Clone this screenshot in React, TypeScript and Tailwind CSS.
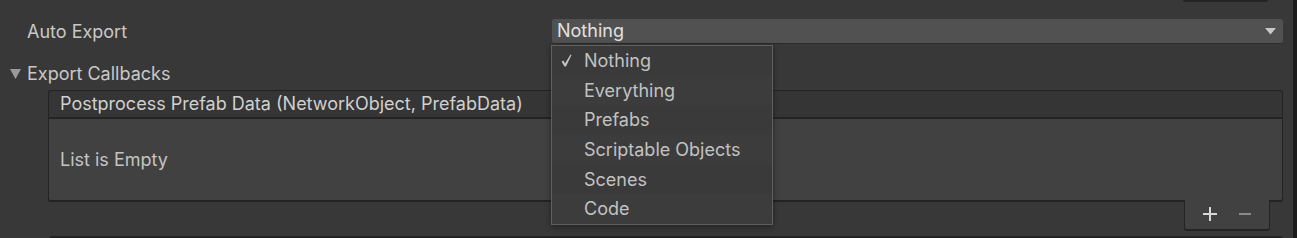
import React from "react"

const font = { fontFamily: "Inter, 'Noto Sans', sans-serif" }

const options = ["Nothing", "Everything", "Prefabs", "Scriptable Objects", "Scenes", "Code"]

export default function App() {
  return (
    <div
      className="flex h-[238px] w-[1297px] overflow-hidden bg-[#383838] text-[18px] leading-none text-[#c4c4c4]"
      style={font}
    >
      <div className="relative w-[1293px]">
        {/* bottom of a button from the section above */}
        <div className="flex h-[19px] justify-end pr-[25px]">
          <div className="h-[2px] w-[85px] rounded-b-[3px] bg-[#242424]" />
        </div>

        {/* Auto Export */}
        <div className="flex h-[25px] items-center">
          <div className="w-[552px] pl-[27px] text-[#c8c8c8]">Auto Export</div>
          <div className="flex h-[25px] w-[731px] items-center justify-between rounded-[3px] border-b border-[#2c2c2c] bg-[#515151] pl-[5px] pr-[7px] text-[#e2e2e2]">
            <span>Nothing</span>
            <svg width="11" height="7" viewBox="0 0 11 7">
              <path d="M0 0 H11 L5.5 6.5 Z" fill="#c8c8c8" />
            </svg>
          </div>
        </div>

        {/* Export Callbacks foldout */}
        <div className="mt-[19px] flex h-[22px] items-center">
          <svg width="11" height="10" viewBox="0 0 11 10" className="ml-[10px] mr-[6px]">
            <path d="M0 0 H11 L5.5 10 Z" fill="#9a9a9a" />
          </svg>
          <span className="text-[#c8c8c8]">Export Callbacks</span>
        </div>

        {/* list box */}
        <div className="ml-[48px] mt-[5px] w-[1235px]">
          <div className="flex h-[29px] items-center rounded-t-[3px] border-x border-t border-b-2 border-[#232323] bg-[#353535] pl-[11px] text-[#d0d0d0]">
            Postprocess Prefab Data (NetworkObject, PrefabData)
          </div>
          <div className="flex h-[83px] items-center rounded-b-[3px] border-x border-b-2 border-[#232323] bg-[#414141] pl-[11px] text-[#c4c4c4]">
            List is Empty
          </div>
          <div className="flex justify-end pr-[13px]">
            <div className="-mt-[2px] flex h-[31px] w-[86px] items-center justify-center gap-[22px] rounded-b-[3px] border-x border-b-2 border-[#232323] bg-[#414141] pb-[2px]">
              <svg width="14" height="14" viewBox="0 0 14 14">
                <path d="M7 0 V14 M0 7 H14" stroke="#d8d8d8" strokeWidth="2" />
              </svg>
              <svg width="12" height="14" viewBox="0 0 12 14">
                <path d="M0 7 H12" stroke="#8a8a8a" strokeWidth="2" />
              </svg>
            </div>
          </div>
        </div>

        {/* next box below */}
        <div className="ml-[49px] mt-[5px] h-[4px] w-[1234px] rounded-t-[3px] border-t-2 border-[#232323] bg-[#353535]" />

        {/* dropdown menu */}
        <div className="absolute left-[551px] top-[45px] w-[222px] border border-[#5f5f5f] bg-[#3a3a3a] shadow-[0_2px_6px_rgba(0,0,0,0.4)]">
          {options.map((o, i) => (
            <div
              key={o}
              className={
                "flex h-[29.7px] items-center " + (i % 2 === 1 ? "bg-[#3c3c3c]" : "bg-[#3a3a3a]")
              }
            >
              <div className="flex w-[32px] justify-center pr-[3px]">
                {i === 0 && (
                  <svg width="11" height="13" viewBox="0 0 11 13">
                    <path d="M0.5 7.5 L2.5 6.5 L4 9.5 L9.5 0.5 L10.5 1 L5 12.5 L3.5 12.5 Z" fill="#c4c4c4" />
                  </svg>
                )}
              </div>
              <span className="text-[#c2c2c2]">{o}</span>
            </div>
          ))}
        </div>
      </div>
      <div className="w-[4px] bg-[#1b1b1b]" />
    </div>
  )
}
